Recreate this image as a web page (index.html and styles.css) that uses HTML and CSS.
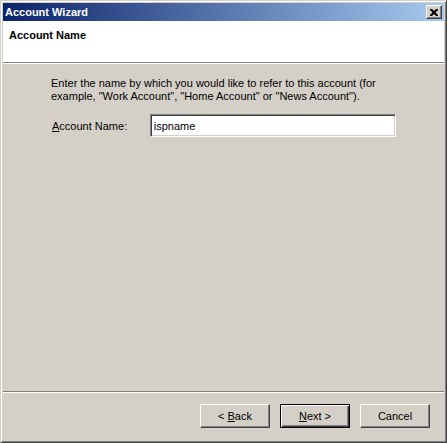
FILE: index.html
```html
<!DOCTYPE html>
<html lang="en">
<head>
    <meta charset="UTF-8">
    <meta name="viewport" content="width=device-width, initial-scale=1.0">
    <title>Account Wizard</title>
    <link rel="stylesheet" href="styles.css">
</head>
<body>
    <div class="window">
        <div class="titlebar">
            <span class="title">Account Wizard</span>
            <span class="close-btn">
                <svg width="8" height="7" viewBox="0 0 8 7">
                    <path d="M0 0h2l2 2 2-2h2v1l-2.5 2.5L8 6v1H6L4 5 2 7H0V6l2.5-2.5L0 1z" fill="#000"/>
                </svg>
            </span>
        </div>

        <div class="header">
            <h1>Account Name</h1>
        </div>

        <div class="content">
            <p class="intro">Enter the name by which you would like to refer to this account (for example, "Work Account", "Home Account" or "News Account").</p>
            <div class="field">
                <label for="account-name"><u>A</u>ccount Name:</label>
                <input type="text" id="account-name" value="ispname">
            </div>
        </div>

        <div class="footer">
            <button type="button">&lt; <u>B</u>ack</button>
            <button type="button" class="default"><u>N</u>ext &gt;</button>
            <button type="button">Cancel</button>
        </div>
    </div>
</body>
</html>
```

FILE: styles.css
```css
* {
    margin: 0;
    padding: 0;
    box-sizing: border-box;
    font-family: 'Liberation Sans', Arial, sans-serif;
}

body {
    background-color: #d4d0c8;
}

.window {
    width: 447px;
    height: 443px;
    display: flex;
    flex-direction: column;
    background-color: #d4d0c8;
    border: 1px solid;
    border-color: #d4d0c8 #404040 #404040 #d4d0c8;
    box-shadow: inset 1px 1px #fff, inset -1px -1px #808080;
    padding: 2px;
}

.titlebar {
    height: 18px;
    display: flex;
    align-items: center;
    justify-content: space-between;
    padding: 0 2px;
    background: linear-gradient(to right, #0a246a, #a6caf0);
}

.title {
    color: white;
    font-size: 11px;
    font-weight: bold;
}

.close-btn {
    width: 16px;
    height: 14px;
    display: flex;
    align-items: center;
    justify-content: center;
    background-color: #d4d0c8;
    border: 1px solid;
    border-color: #fff #404040 #404040 #fff;
    box-shadow: inset -1px -1px #808080;
}

.header {
    height: 43px;
    background-color: white;
    padding: 8px 6px 0;
    border-bottom: 1px solid #fff;
    box-shadow: 0 -1px #808080 inset;
}

.header h1 {
    font-size: 11px;
    font-weight: bold;
    color: #000;
}

.content {
    flex: 1;
    padding: 13px 48px 0;
    font-size: 11px;
    color: #000;
}

.intro {
    line-height: 13px;
    margin-bottom: 11px;
}

.field {
    display: flex;
    align-items: center;
}

.field label {
    width: 99px;
    padding-left: 1px;
}

.field input {
    width: 247px;
    height: 23px;
    padding: 0 3px;
    font-size: 11px;
    color: #000;
    background-color: white;
    border: 1px solid;
    border-color: #808080 #fff #fff #808080;
    box-shadow: inset 1px 1px #404040, inset -1px -1px #d4d0c8;
    outline: none;
}

.footer {
    height: 49px;
    display: flex;
    justify-content: flex-end;
    gap: 10px;
    padding: 12px 14px 0 0;
    border-top: 1px solid #808080;
    box-shadow: inset 0 1px #fff;
}

button {
    width: 70px;
    height: 24px;
    font-size: 11px;
    color: #000;
    background-color: #d4d0c8;
    border: 1px solid;
    border-color: #fff #404040 #404040 #fff;
    box-shadow: inset -1px -1px #808080;
}

button.default {
    border-color: #000;
    box-shadow: inset 1px 1px #fff, inset -1px -1px #404040, inset -2px -2px #808080;
}
```
